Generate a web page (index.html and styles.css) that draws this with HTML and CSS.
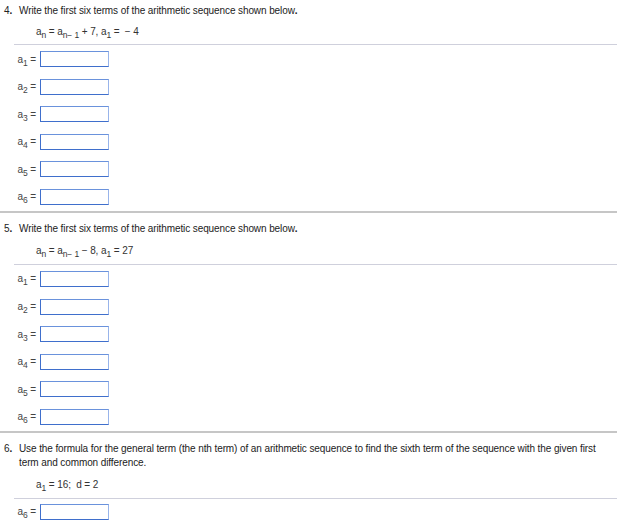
FILE: index.html
```html
<!DOCTYPE html>
<html>
<head>
<meta charset="utf-8">
<link rel="stylesheet" href="styles.css">
</head>
<body>
<div class="question q4">
  <div class="q-head"><span class="q-num">4<b>.</b></span><span class="q-text">Write the first six terms of the arithmetic sequence shown below<b>.</b></span></div>
  <div class="formula">a<sub>n</sub> = a<sub>n&minus; 1</sub> + 7, a<sub>1</sub> = &nbsp;&minus; 4</div>
  <div class="rule"></div>
  <div class="answers">
    <div class="row"><span class="label">a<sub>1</sub> =</span><span class="box"></span></div>
    <div class="row"><span class="label">a<sub>2</sub> =</span><span class="box"></span></div>
    <div class="row"><span class="label">a<sub>3</sub> =</span><span class="box"></span></div>
    <div class="row"><span class="label">a<sub>4</sub> =</span><span class="box"></span></div>
    <div class="row"><span class="label">a<sub>5</sub> =</span><span class="box"></span></div>
    <div class="row"><span class="label">a<sub>6</sub> =</span><span class="box"></span></div>
  </div>
</div>
<div class="question q5">
  <div class="q-head"><span class="q-num">5<b>.</b></span><span class="q-text">Write the first six terms of the arithmetic sequence shown below<b>.</b></span></div>
  <div class="formula">a<sub>n</sub> = a<sub>n&minus; 1</sub> &minus; 8, a<sub>1</sub> = 27</div>
  <div class="rule"></div>
  <div class="answers">
    <div class="row"><span class="label">a<sub>1</sub> =</span><span class="box"></span></div>
    <div class="row"><span class="label">a<sub>2</sub> =</span><span class="box"></span></div>
    <div class="row"><span class="label">a<sub>3</sub> =</span><span class="box"></span></div>
    <div class="row"><span class="label">a<sub>4</sub> =</span><span class="box"></span></div>
    <div class="row"><span class="label">a<sub>5</sub> =</span><span class="box"></span></div>
    <div class="row"><span class="label">a<sub>6</sub> =</span><span class="box"></span></div>
  </div>
</div>
<div class="question q6">
  <div class="q-head"><span class="q-num">6<b>.</b></span><span class="q-text">Use the formula for the general term (the nth term) of an arithmetic sequence to find the sixth term of the sequence with the given first term and common difference.</span></div>
  <div class="formula">a<sub>1</sub> = 16;&nbsp; d = 2</div>
  <div class="rule"></div>
  <div class="answers">
    <div class="row"><span class="label">a<sub>6</sub> =</span><span class="box"></span></div>
  </div>
</div>
</body>
</html>
```
FILE: styles.css
```css
html, body {
  margin: 0;
  padding: 0;
  background: #ffffff;
}
body {
  font-family: "Liberation Sans", Arial, sans-serif;
  font-size: 10px;
  letter-spacing: -0.1px;
  color: #222222;
  width: 617px;
  overflow: hidden;
}
.question {
  padding: 4px 0 6px;
}
.q5, .q6 {
  border-top: 2px solid #c6c6c6;
  padding-top: 9px;
}
.q-head {
  display: flex;
  line-height: 14px;
}
.q-num {
  flex: 0 0 19px;
  box-sizing: border-box;
  padding-left: 4px;
}
.q-text {
  flex: 1;
  padding-right: 4px;
}
.formula {
  margin: 5px 0 0 36px;
  line-height: 18px;
  height: 18px;
  color: #333333;
}
.q5 .formula, .q6 .formula {
  margin-top: 6px;
}
sub {
  font-size: 8.5px;
  vertical-align: -3px;
  line-height: 0;
}
.rule {
  margin: 3px 0 0 14px;
  border-top: 1px solid #cfd0dc;
}
.q5 .rule, .q6 .rule {
  margin-top: 4px;
}
.answers {
  display: flex;
  flex-direction: column;
  gap: 11.6px;
  padding-top: 6px;
}
.q6 .answers {
  padding-top: 5px;
}
.row {
  display: flex;
  align-items: center;
  height: 16px;
}
.label {
  width: 40px;
  box-sizing: border-box;
  text-align: right;
  padding-right: 4px;
  color: #444444;
}
.box {
  width: 69px;
  height: 16px;
  box-sizing: border-box;
  border: 1px solid #3f6fcc;
  border-top-color: #6a92dc;
  border-right-color: #98b4ea;
  background: #ffffff;
}
```
